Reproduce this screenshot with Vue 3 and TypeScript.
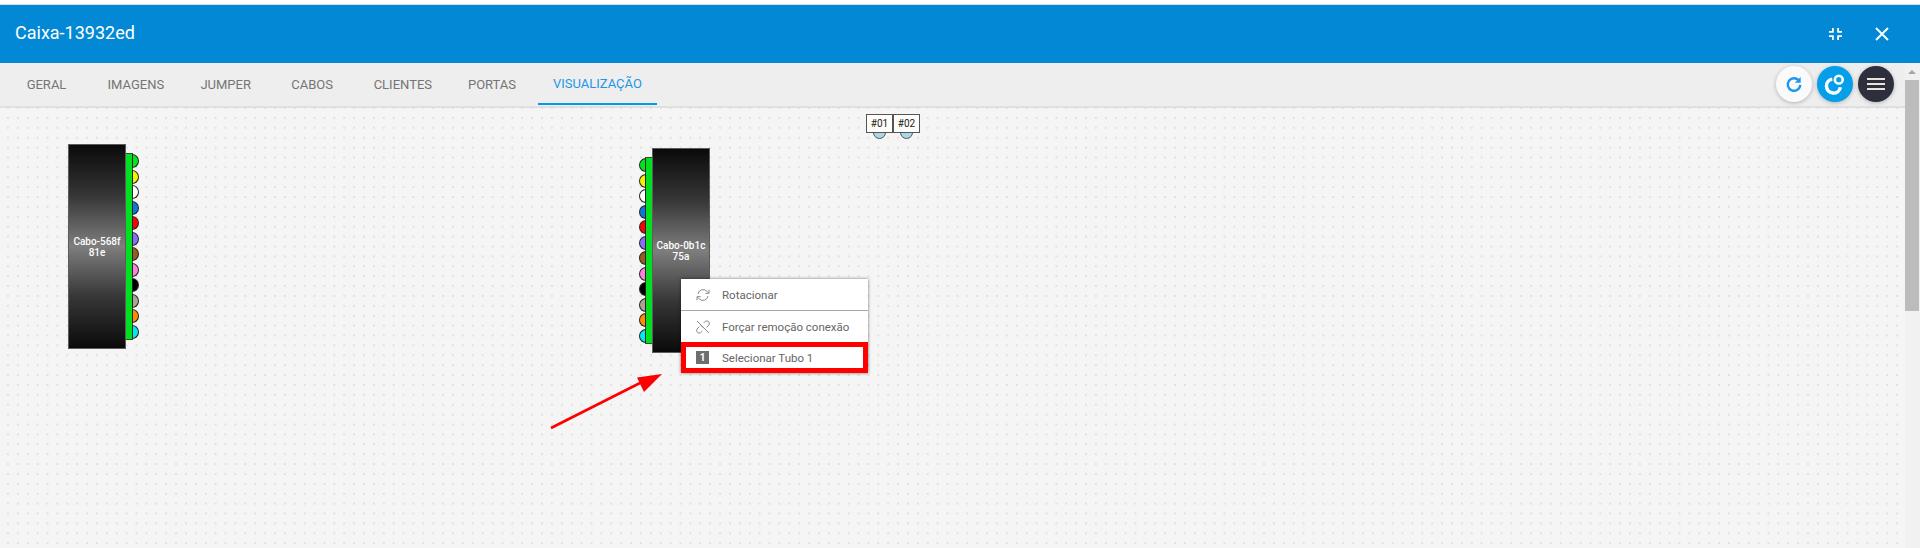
<script setup lang="ts">
const tabs = ['GERAL', 'IMAGENS', 'JUMPER', 'CABOS', 'CLIENTES', 'PORTAS', 'VISUALIZAÇÃO']
const fibers = ['#00e61e', '#f2f200', '#ffffff', '#0a78e0', '#ff0000', '#8a6cff', '#9a5b1c', '#ff80e0', '#000000', '#aba494', '#ff8c00', '#00e8f0']
</script>

<template>
  <div class="page">
    <header class="titlebar">
      <span class="title">Caixa-13932ed</span>
      <div class="window-actions">
        <svg class="shrink" viewBox="0 0 14 14" width="14" height="14">
          <path d="M1 4h3V1h1.800v4.800H1zM9.200 1H11v3h3v1.800H9.200zM1 8.200h4.800V13H4v-3H1zM9.200 8.200H14V10h-3v3H9.200z" fill="#fff" />
        </svg>
        <svg class="close" viewBox="0 0 14 14" width="14" height="14">
          <path d="M1 1l12 12M13 1L1 13" stroke="#fff" stroke-width="1.900" fill="none" />
        </svg>
      </div>
    </header>

    <div class="workspace">
      <div class="main">
        <nav class="tabbar">
          <a v-for="t in tabs" :key="t" class="tab" :class="{ active: t === 'VISUALIZAÇÃO' }">{{ t }}</a>
          <div class="fabs">
            <button class="fab white">
              <svg viewBox="0 0 24 24" width="20" height="20">
                <path d="M18.300 8.500A7.500 7.500 0 1 0 19.500 13" fill="none" stroke="#1e96ee" stroke-width="2.800" />
                <path d="M20 3.500v7h-7z" fill="#1e96ee" />
              </svg>
            </button>
            <button class="fab blue">
              <svg viewBox="0 0 24 24" width="26" height="26">
                <path d="M9.500 7.500A6.500 6.500 0 1 0 17 15" fill="none" stroke="#fff" stroke-width="3.200" />
                <circle cx="15.500" cy="8" r="3.600" fill="none" stroke="#fff" stroke-width="2.400" />
              </svg>
            </button>
            <button class="fab dark">
              <svg viewBox="0 0 18 12" width="18" height="12">
                <path d="M0 1h18M0 6h18M0 11h18" stroke="#e8e4dc" stroke-width="2" />
              </svg>
            </button>
          </div>
        </nav>

        <section class="canvas">
          <div class="cable left-cable">
            <div class="cable-body"><span>Cabo-568f81e</span></div>
            <div class="tube">
              <i v-for="(c, i) in fibers" :key="i" class="fiber" :style="{ background: c }"></i>
            </div>
          </div>

          <div class="cable right-cable">
            <div class="tube">
              <i v-for="(c, i) in fibers" :key="i" class="fiber" :style="{ background: c }"></i>
            </div>
            <div class="cable-body"><span>Cabo-0b1c75a</span></div>
          </div>

          <div class="port p1"><span class="port-dot"></span><span class="port-label">#01</span></div>
          <div class="port p2"><span class="port-dot"></span><span class="port-label">#02</span></div>

          <div class="menu">
            <div class="menu-item first">
              <svg viewBox="0 0 24 24" width="16" height="16" class="menu-icon">
                <path d="M4.500 10.500a7.800 7.800 0 0 1 13.500-4L20.500 9M19.500 13.500a7.800 7.800 0 0 1-13.500 4L3.500 15" fill="none" stroke="#8a8a8a" stroke-width="1.500" />
                <path d="M21 4V9.500H15.500M3 20V14.500H8.500" fill="none" stroke="#8a8a8a" stroke-width="1.500" />
              </svg>
              <span>Rotacionar</span>
            </div>
            <div class="menu-item second">
              <svg viewBox="0 0 24 24" width="16" height="16" class="menu-icon">
                <path d="M13 6l2.500-2.500a4 4 0 0 1 5.500 5.500L17.500 12.500M11 18l-2.500 2.500a4 4 0 0 1-5.500-5.500L6.500 11.500M8 9l7 6" fill="none" stroke="#8a8a8a" stroke-width="1.500" />
                <path d="M3 3l18 18" stroke="#8a8a8a" stroke-width="1.500" />
              </svg>
              <span>Forçar remoção conexão</span>
            </div>
            <div class="menu-item third">
              <span class="num">1</span>
              <span>Selecionar Tubo 1</span>
            </div>
          </div>

          <svg class="arrow" viewBox="0 0 140 80" width="140" height="80">
            <path d="M11 63 L100 18" stroke="#fe0000" stroke-width="2.600" fill="none" />
            <path d="M122 9 L97 12.500 L104 27 Z" fill="#fe0000" />
          </svg>
        </section>
      </div>

      <aside class="scrollbar">
        <span class="scroll-up"></span>
        <span class="scroll-thumb"></span>
      </aside>
    </div>
  </div>
</template>

<style>
html, body { margin: 0; background: #fff; overflow: hidden; }
</style>

<style scoped>
.page {
  width: 1920px;
  height: 548px;
  display: flex;
  flex-direction: column;
  font-family: Roboto, "Liberation Sans", sans-serif;
  background: #fff;
  overflow: hidden;
}
.titlebar {
  margin-top: 4px;
  border-top: 1px solid #dcdcdc;
  height: 59px;
  flex: none;
  background: #0288d4;
  color: #fff;
  display: flex;
  align-items: center;
  justify-content: space-between;
  padding: 0 31px 4px 15px;
  box-sizing: border-box;
}
.title { font-size: 18px; }
.window-actions { display: flex; gap: 33px; align-items: center; margin-top: 4px; }
.workspace { flex: 1; display: flex; min-height: 0; }
.main { flex: 1; min-width: 0; display: flex; flex-direction: column; }
.tabbar {
  height: 45px;
  flex: none;
  box-sizing: border-box;
  background: #eeeeee;
  border-bottom: 2px solid #e0e0e0;
  display: flex;
  padding-left: 3px;
  gap: 3px;
  position: relative;
}
.tab {
  min-width: 86px;
  box-sizing: border-box;
  padding: 1px 15.500px 0;
  height: 42px;
  display: flex;
  align-items: center;
  justify-content: center;
  font-size: 13px;
  color: #757575;
  white-space: nowrap;
}
.tab:first-child { padding-left: 16.500px; }
.tab:nth-child(4) { margin-left: -2.500px; }
.tab:nth-child(6) { margin-left: -1.500px; }
.tab:nth-child(7) { margin-left: -0.500px; }
.tab.active {
  color: #1e96e8;
  border-bottom: 2px solid #039be5;
}
.fabs {
  margin-left: auto;
  display: flex;
  gap: 5px;
  padding: 3px 11px 0 0;
}
.fab {
  width: 36px;
  height: 36px;
  border: 0;
  border-radius: 50%;
  padding: 0;
  display: flex;
  align-items: center;
  justify-content: center;
  box-shadow: 0 1px 4px rgba(0, 0, 0, .25);
}
.fab.white { background: #fafafa; }
.fab.blue { background: #039fe8; }
.fab.dark { background: #2d303c; }
.canvas {
  flex: 1;
  position: relative;
  background-color: #f5f5f5;
  background-image: radial-gradient(circle at center, #cdcdcd 0, #cdcdcd .5px, transparent .9px);
  background-size: 9.900px 9.900px;
  background-position: 3px -4.950px;
  overflow: hidden;
}
.cable { position: absolute; display: flex; align-items: center; }
.left-cable { left: 68px; top: 36px; }
.right-cable { left: 645px; top: 40px; }
.cable-body {
  width: 58px;
  height: 205px;
  box-sizing: border-box;
  border: 1px solid #5c5c5c;
  background: linear-gradient(#0a0a0a 0%, #363636 25%, #7e7e7e 50%, #363636 75%, #0a0a0a 100%);
  color: #fff;
  font-size: 10px;
  line-height: 11px;
  font-weight: 500;
  text-align: center;
  display: flex;
  align-items: center;
  justify-content: center;
  padding: 0 3px;
  word-break: break-all;
}
.tube {
  width: 7px;
  height: 187px;
  box-sizing: border-box;
  background: #00e020;
  border: 1px solid #2f4f2f;
  display: flex;
  flex-direction: column;
  justify-content: space-between;
  position: relative;
}
.left-cable .tube { align-items: flex-start; border-left: 0; }
.right-cable .tube { align-items: flex-end; border-right: 0; }
.fiber {
  display: block;
  width: 7px;
  height: 14px;
  box-sizing: border-box;
  border: 1px solid #222;
  flex: none;
}
.left-cable .fiber {
  margin-left: 6px;
  border-radius: 0 7px 7px 0;
}
.right-cable .fiber {
  margin-right: 6px;
  border-width: 1.500px;
  border-radius: 7px 0 0 7px;
}
.port { position: absolute; top: 6px; width: 27px; height: 26px; }
.p1 { left: 866px; }
.p2 { left: 893px; }
.port-label {
  position: absolute;
  inset: 0 0 7px 0;
  box-sizing: border-box;
  background: #fffdf8;
  border: 1px solid #555;
  color: #222;
  font-size: 10px;
  display: flex;
  align-items: center;
  justify-content: center;
}
.port-dot {
  position: absolute;
  left: 7px;
  top: 12px;
  width: 13px;
  height: 13px;
  box-sizing: border-box;
  border: 1px solid #555;
  border-radius: 50%;
  background: #a8d8e8;
}
.menu {
  position: absolute;
  left: 681px;
  top: 171px;
  width: 187px;
  height: 94px;
  box-sizing: border-box;
  background: #fff;
  box-shadow: 0 0 3px rgba(0, 0, 0, .55);
  font-size: 11.500px;
  color: #666;
}
.menu-item {
  display: flex;
  align-items: center;
  box-sizing: border-box;
  padding-left: 14px;
  gap: 11px;
}
.menu-icon { flex: none; }
.first { height: 32px; border-bottom: 1px solid #a8a8a8; }
.second { height: 31px; }
.third {
  height: 31px;
  border: 5px solid #fe0000;
  padding-left: 10px;
}
.num {
  width: 13px;
  height: 13px;
  background: #6e6e6e;
  color: #fff;
  font-size: 10px;
  font-weight: 700;
  display: flex;
  align-items: center;
  justify-content: center;
  margin-right: 2px;
}
.arrow { position: absolute; left: 540px; top: 257px; }
.scrollbar {
  width: 15px;
  flex: none;
  background: #f1f1f1;
  position: relative;
}
.scroll-up {
  position: absolute;
  left: 3px;
  top: 7px;
  width: 0;
  height: 0;
  border-left: 4px solid transparent;
  border-right: 4px solid transparent;
  border-bottom: 4px solid #a3a3a3;
}
.scroll-thumb {
  position: absolute;
  left: 0;
  top: 17px;
  width: 14px;
  height: 231px;
  background: #bcbcbc;
}
</style>
